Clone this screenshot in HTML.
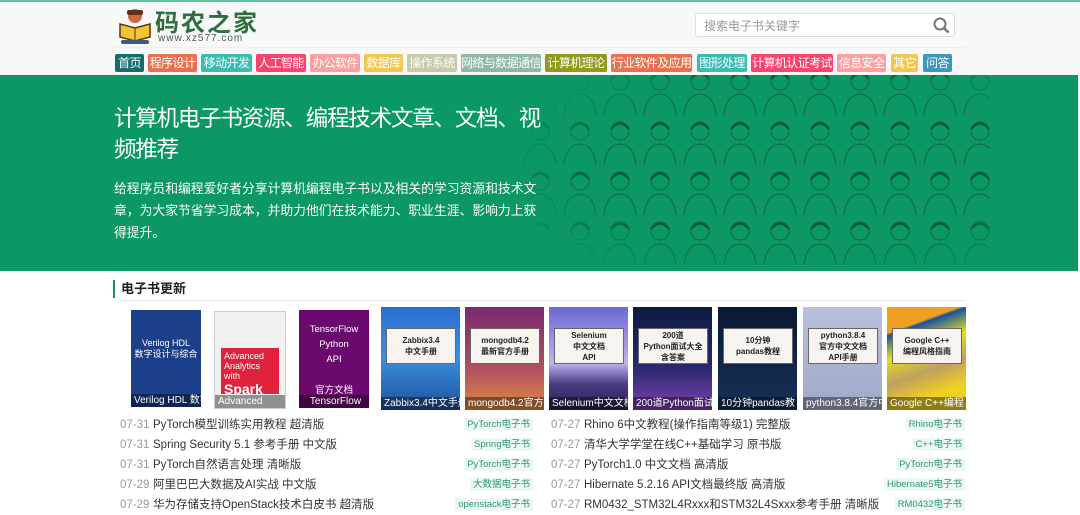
<!DOCTYPE html>
<html><head><meta charset="utf-8"><style>
*{margin:0;padding:0;box-sizing:border-box}
body{width:1080px;height:512px;overflow:hidden;background:#fff;font-family:"Liberation Sans","Noto Sans CJK SC",sans-serif;position:relative}
.top{position:absolute;left:0;top:0;width:1080px;height:75px;background:#f8f8f8;border-top:2px solid #5fc4a0}
.logo{position:absolute;left:118px;top:5px}
.brand{position:absolute;left:155px;top:4px;font-size:24px;font-weight:bold;color:#2d6e3a;letter-spacing:2px;font-family:"Noto Sans CJK SC",sans-serif;line-height:30px}
.url{position:absolute;left:158px;top:31px;font-size:10px;color:#555;letter-spacing:1px}
.search{position:absolute;left:695px;top:11px;width:260px;height:24px;border:1px solid #ddd;border-radius:3px;background:#fff;font-size:12px;color:#999;padding:3px 8px}
.hr{position:absolute;left:115px;top:45px;width:850px;height:1px;background:#eee}
.nav span{position:absolute;top:52px;height:18px;font-size:12px;letter-spacing:-0.6px;color:#fff;line-height:18px;text-align:center;border-radius:2px;white-space:nowrap;overflow:hidden}
.hero{position:absolute;left:0;top:75px;width:1078px;height:196px;background:#0b9862;overflow:hidden}
.h1{position:absolute;left:114px;top:28px;width:440px;font-size:22.5px;letter-spacing:-1.2px;line-height:31px;color:#fff}
.p{position:absolute;left:114px;top:103px;width:424px;font-size:12.8px;line-height:22px;color:#fff}
.sec{position:absolute;left:113px;top:280px;border-left:2px solid #0b9862;padding-left:6px;font-size:13px;font-weight:bold;color:#222;height:18px;line-height:18px}
.line{position:absolute;left:120px;top:300px;width:845px;height:1px;background:#e6e6e6}
.bk{position:absolute;top:307px;width:79px;height:103px;overflow:hidden}
.bk .cap{position:absolute;left:0;bottom:0;width:100%;height:13px;background:rgba(0,0,0,.4);color:#fff;font-size:10px;line-height:13px;padding-left:3px;white-space:nowrap}
.bk .lb{position:absolute;left:5px;top:21px;width:70px;height:36px;background:#f7f3ef;border:1px solid #666;font-size:8px;font-weight:bold;color:#222;text-align:center;line-height:11px;display:flex;align-items:center;justify-content:center}
.row{position:absolute;height:20px;font-size:11.5px;line-height:20px;color:#333}
.row .d{color:#999;display:inline-block;width:33px}
.tg{position:absolute;top:419px;font-size:9.5px;color:#2a9a78;background:#eef7f3;height:13px;line-height:13px;padding:0 3px}
</style></head><body>
<div class="top">
<svg class="logo" width="34" height="38" viewBox="0 0 34 38"><circle cx="17" cy="9" r="7" fill="#c86a3a"/><rect x="9" y="3" width="16" height="5" rx="2" fill="#5a3418"/><path d="M2 17 L17 21 L32 17 L32 30 L17 34 L2 30Z" fill="#f5c530" stroke="#5a3418" stroke-width="1.5"/><line x1="17" y1="21" x2="17" y2="34" stroke="#5a3418"/><rect x="3" y="33" width="28" height="4" rx="2" fill="#3d5a80"/></svg>
<div class="brand">码农之家</div><div class="url">www.xz577.com</div>
<div class="search">搜索电子书关键字<svg style="position:absolute;right:4px;top:3px" width="17" height="17" viewBox="0 0 17 17"><circle cx="7" cy="7" r="5.5" fill="none" stroke="#777" stroke-width="2"/><line x1="11" y1="11" x2="15.5" y2="15.5" stroke="#777" stroke-width="2.5"/></svg></div>
<div class="hr"></div>
<div class="nav">
<span style="left:115px;width:29px;background:#136d6b">首页</span>
<span style="left:148px;width:49px;background:#e8704f">程序设计</span>
<span style="left:201px;width:51px;background:#3cbcb0">移动开发</span>
<span style="left:256px;width:50px;background:#f5456c">人工智能</span>
<span style="left:310px;width:50px;background:#f9a0a0">办公软件</span>
<span style="left:364px;width:39px;background:#f1c84f">数据库</span>
<span style="left:407px;width:50px;background:#c8c8aa">操作系统</span>
<span style="left:461px;width:80px;background:#8fb8a2">网络与数据通信</span>
<span style="left:545px;width:62px;background:#919b19">计算机理论</span>
<span style="left:611px;width:81px;background:#e8704f">行业软件及应用</span>
<span style="left:697px;width:50px;background:#3cbcb0">图形处理</span>
<span style="left:751px;width:82px;background:#f5456c">计算机认证考试</span>
<span style="left:837px;width:49px;background:#f9a0a0">信息安全</span>
<span style="left:891px;width:27px;background:#f1c84f">其它</span>
<span style="left:923px;width:29px;background:#3a98c0">问答</span>
</div></div>
<div class="hero">
<svg style="position:absolute;left:520px;top:-10px" width="470" height="206">
<defs><pattern id="pp" width="40" height="50" patternUnits="userSpaceOnUse"><circle cx="20" cy="16" r="9" fill="none" stroke="#0a6e48" stroke-width="1.2"/><path d="M11 14 Q20 3 29 14" fill="none" stroke="#085a38" stroke-width="2.5"/><path d="M4 50 Q6 30 20 29 Q34 30 36 50" fill="none" stroke="#0a6e48" stroke-width="1.2"/></pattern>
<radialGradient id="m" cx="0.6" cy="0.5" r="0.65"><stop offset="0.65" stop-color="#fff"/><stop offset="1" stop-color="#000"/></radialGradient><mask id="mk"><rect width="470" height="206" fill="url(#m)"/></mask></defs>
<rect width="470" height="206" fill="url(#pp)" mask="url(#mk)"/></svg>
<div class="h1">计算机电子书资源、编程技术文章、文档、视频推荐</div>
<div class="p">给程序员和编程爱好者分享计算机编程电子书以及相关的学习资源和技术文章，为大家节省学习成本，并助力他们在技术能力、职业生涯、影响力上获得提升。</div>
</div>
<div class="sec">电子书更新</div><div class="line"></div>
<div class="bk" style="left:131px;top:310px;width:70px;height:97px;background:#1c3f8a"><div style="color:#fff;font-size:9px;text-align:center;margin-top:28px;line-height:11px">Verilog HDL<br>数字设计与综合</div><div class="cap">Verilog HDL 数字</div></div>
<div class="bk" style="left:214px;top:311px;width:72px;height:98px;background:#f0f0f0;border:1px solid #ccc"><div style="position:absolute;top:36px;left:6px;width:58px;height:46px;background:#e0223c;color:#fff;font-size:9px;padding:3px">Advanced Analytics with<br><b style="font-size:14px">Spark</b></div><div class="cap">Advanced</div></div>
<div class="bk" style="left:299px;top:310px;width:70px;height:98px;background:#6a0a6e;color:#fff;font-size:9.5px;text-align:center;line-height:15px"><div style="margin-top:12px">TensorFlow<br>Python<br>API</div><div style="margin-top:16px">官方文档</div><div class="cap">TensorFlow</div></div>
<div class="bk" style="left:381px;background:linear-gradient(#2b6fcf,#3a8fdd 50%,#1d4f9a)"><div class="lb">Zabbix3.4<br>中文手册</div><div class="cap">Zabbix3.4中文手册</div></div>
<div class="bk" style="left:465px;background:linear-gradient(#7a2a70,#b05060 60%,#e08a40)"><div class="lb">mongodb4.2<br>最新官方手册</div><div class="cap">mongodb4.2官方</div></div>
<div class="bk" style="left:549px;background:linear-gradient(#6a6ad0,#c0b0f0 55%,#4a3a80 75%,#2a2050)"><div class="lb">Selenium<br>中文文档<br>API</div><div class="cap">Selenium中文文档</div></div>
<div class="bk" style="left:633px;background:linear-gradient(#0e1a40,#2a2a70 60%,#8040b0)"><div class="lb">200道<br>Python面试大全<br>含答案</div><div class="cap">200道Python面试</div></div>
<div class="bk" style="left:718px;background:linear-gradient(#0a1830,#183058)"><div class="lb">10分钟<br>pandas教程</div><div class="cap">10分钟pandas教</div></div>
<div class="bk" style="left:803px;background:linear-gradient(#b8c0dc,#a0a8c8)"><div class="lb">python3.8.4<br>官方中文文档<br>API手册</div><div class="cap">python3.8.4官方中</div></div>
<div class="bk" style="left:887px;background:linear-gradient(160deg,#f0a020 20%,#1a50a0 22%,#e0e020 40%,#c0a060 60%,#f0d020 80%)"><div class="lb">Google C++<br>编程风格指南</div><div class="cap">Google C++编程</div></div>

<div class="row" style="left:120px;top:415px"><span class="d">07-31</span>PyTorch模型训练实用教程 超清版</div>
<div class="row" style="left:120px;top:435px"><span class="d">07-31</span>Spring Security 5.1 参考手册 中文版</div>
<div class="row" style="left:120px;top:455px"><span class="d">07-31</span>PyTorch自然语言处理 清晰版</div>
<div class="row" style="left:120px;top:475px"><span class="d">07-29</span>阿里巴巴大数据及AI实战 中文版</div>
<div class="row" style="left:120px;top:495px"><span class="d">07-29</span>华为存储支持OpenStack技术白皮书 超清版</div>
<div class="row" style="left:551px;top:415px"><span class="d">07-27</span>Rhino 6中文教程(操作指南等级1) 完整版</div>
<div class="row" style="left:551px;top:435px"><span class="d">07-27</span>清华大学学堂在线C++基础学习 原书版</div>
<div class="row" style="left:551px;top:455px"><span class="d">07-27</span>PyTorch1.0 中文文档 高清版</div>
<div class="row" style="left:551px;top:475px"><span class="d">07-27</span>Hibernate 5.2.16 API文档最终版 高清版</div>
<div class="row" style="left:551px;top:495px"><span class="d">07-27</span>RM0432_STM32L4Rxxx和STM32L4Sxxx参考手册 清晰版</div>

<div class="tg" style="right:547px;top:418px">PyTorch电子书</div>
<div class="tg" style="right:547px;top:438px">Spring电子书</div>
<div class="tg" style="right:547px;top:458px">PyTorch电子书</div>
<div class="tg" style="right:547px;top:478px">大数据电子书</div>
<div class="tg" style="right:547px;top:498px">openstack电子书</div>
<div class="tg" style="right:115px;top:418px">Rhino电子书</div>
<div class="tg" style="right:115px;top:438px">C++电子书</div>
<div class="tg" style="right:115px;top:458px">PyTorch电子书</div>
<div class="tg" style="right:115px;top:478px">Hibernate5电子书</div>
<div class="tg" style="right:115px;top:498px">RM0432电子书</div>
</body></html>
